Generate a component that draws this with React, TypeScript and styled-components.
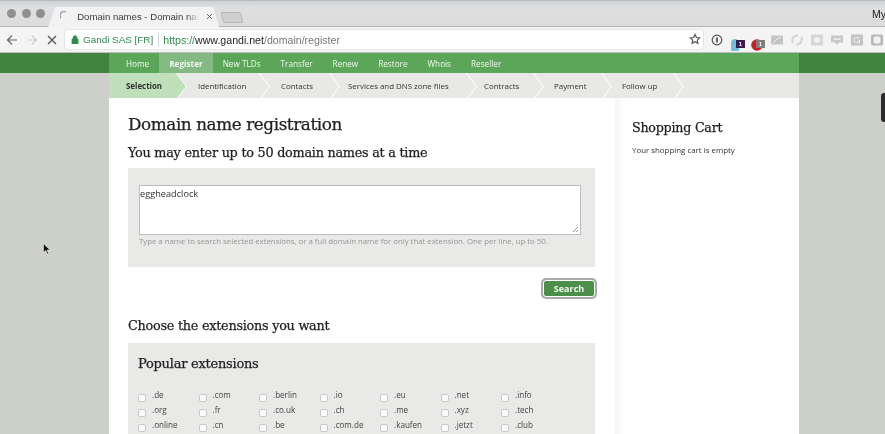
import React from "react";
import styled, { createGlobalStyle } from "styled-components";

const Global = createGlobalStyle`
  html, body { margin: 0; padding: 0; width: 885px; height: 434px; overflow: hidden; background: #cdcfc9; }
  * { box-sizing: border-box; }
  body { font-family: "Open Sans", "Liberation Sans", sans-serif; }
`;

const Page = styled.div`
  width: 885px; height: 434px; overflow: hidden; position: relative;
  display: flex; flex-direction: column;
  background: #cdcfc9;
  filter: blur(0.3px);
`;
const TabStrip = styled.div`
  height: 27px; flex: none; display: flex; align-items: flex-end; padding-left: 7px;
  background: linear-gradient(#cfd0d1, #dedfe0 6px, #dcdcdd);
  border-top: 1px solid #b9babb;
  border-bottom: 1px solid #b4b5b6;
  position: relative;
`;
const Lights = styled.div`
  display: flex; gap: 5.6px; align-self: flex-start; margin-top: 8px;
`;
const Light = styled.span`
  width: 9px; height: 9px; border-radius: 50%; background: #8f8f90;
`;
const Tab = styled.div`
  width: 171px; height: 20px; margin-left: 3px; margin-bottom: -1px; background: #f2f2f2;
  display: flex; align-items: center; padding: 0 10px 2px 12px; gap: 7px; position: relative;
  clip-path: polygon(0 100%, 7px 0, 165px 0, 171px 100%);
  color: #3c3c3c; white-space: nowrap;
`;
const TabTitle = styled.span`
  width: 122px; flex: none; font-family: "Liberation Sans", sans-serif; font-size: 9.6px;
  -webkit-mask-image: linear-gradient(90deg, #000 90%, transparent);
  mask-image: linear-gradient(90deg, #000 90%, transparent);
`;
const NewTab = styled.div`
  width: 20px; height: 11px; margin-left: 3px; margin-bottom: 3px; background: #cfcfd0;
  border: 1px solid #b5b5b6; border-radius: 2px; transform: skewX(14deg);
`;
const User = styled.span`
  position: absolute; right: 0; top: 7px; width: 13px; overflow: hidden;
  font: 10.5px "Liberation Sans", sans-serif; color: #222;
`;
const Toolbar = styled.div`
  height: 26px; flex: none; background: #f4f4f4; display: flex; align-items: center;
  padding: 0 0 0 5px; border-bottom: 1px solid #bdbdbd;
`;
const NavIcon = styled.svg`
  width: 14px; height: 14px; flex: none; margin-right: 6px;
`;
const Omni = styled.div`
  width: 638px; height: 19px; flex: none; background: #fff; border-radius: 2px;
  display: flex; align-items: center; padding-left: 6px; font: 10.6px "Liberation Sans", sans-serif;
  box-shadow: 0 0 0 1px #e6e6e6; position: relative;
`;
const LockIcon = styled.svg`
  width: 8px; height: 9px; margin-right: 4px; flex: none;
`;
const Secure = styled.span`
  color: #2e8b4a; padding-right: 5px; border-right: 1px solid #d8d8d8; line-height: 15px; margin-right: 4px;
  font-size: 9.9px;
`;
const Url = styled.span`
  color: #222;
`;
const UrlGreen = styled.span`color: #2e8b4a;`;
const UrlGray = styled.span`color: #777;`;
const Star = styled.svg`
  position: absolute; right: 2px; top: 3px; width: 12px; height: 12px;
`;
const Exts = styled.div`
  display: flex; align-items: center; gap: 8px; margin-left: 8px;
`;
const ExtWrap = styled.div`
  width: 12px; height: 12px; position: relative; flex: none;
`;
const Badge = styled.span<{ $bg: string }>`
  position: absolute; left: 5px; top: 6px; width: 9px; height: 8px; background: ${(p) => p.$bg};
  color: #fff; font: bold 6px/8px "Liberation Sans", sans-serif; text-align: center;
`;
const ExtIcon = styled.svg`
  width: 12px; height: 12px; flex: none;
`;
const NavBand = styled.div`
  height: 20px; flex: none; background: #41843f; display: flex; padding-left: 109px;
`;
const NavInner = styled.nav`
  width: 690px; background: #5ca65a; display: flex; padding-left: 7px;
`;
const NavItem = styled.a<{ $active?: boolean }>`
  display: flex; align-items: center; padding: 0 10px;
  font-size: 8.2px; color: #f2f7f0; font-weight: ${(p) => (p.$active ? 700 : 400)};
  background: ${(p) => (p.$active ? "#85b983" : "transparent")}; white-space: nowrap;
`;
const StepsBand = styled.div`
  height: 25px; flex: none; padding-left: 109px; display: flex;
`;
const Steps = styled.div`
  width: 690px; background: #e8e8e6; display: flex; overflow: hidden;
`;
const Step = styled.div<{ $active?: boolean; $w: number; $pad: number }>`
  width: ${(p) => p.$w}px; flex: none; position: relative; display: flex; align-items: center;
  padding-left: ${(p) => p.$pad}px; font-size: 7.9px; color: #333; white-space: nowrap;
  font-weight: ${(p) => (p.$active ? 700 : 400)};
  background: ${(p) => (p.$active ? "#bfe0bb" : "transparent")};
  &::after {
    content: ""; position: absolute; right: -9px; top: 3.5px; width: 18px; height: 18px; z-index: 1;
    transform: rotate(45deg) skew(8deg, 8deg);
    background: ${(p) => (p.$active ? "#bfe0bb" : "#e8e8e6")};
    border-top: 1px solid #fff; border-right: 1px solid #fff;
  }
`;
const Body = styled.div`
  flex: 1; min-height: 0; padding-left: 109px; display: flex;
`;
const Content = styled.div`
  width: 690px; background: #fff; display: flex;
`;
const Main = styled.main`
  width: 506px; flex: none; padding: 15px 20px 0 19px;
`;
const Side = styled.aside`
  flex: 1; padding: 21px 17px; background: linear-gradient(90deg, #f5f5f5, #fcfcfc 6px, #fff 12px);
`;
const H1 = styled.h1`
  margin: 0; font: 400 16.8px/22px "DejaVu Serif", serif; color: #222; letter-spacing: -0.4px;
  -webkit-text-stroke: 0.25px #222;
`;
const H2 = styled.h2`
  margin: 0; font: 400 12.8px/18px "DejaVu Serif", serif; color: #222; letter-spacing: -0.25px;
  -webkit-text-stroke: 0.25px #222;
`;
const SubHead = styled(H2)`
  margin-top: 9px;
`;
const SearchBox = styled.div`
  margin-top: 6px; height: 99px; background: #e9e9e8; padding: 17px 14px 0 11px;
`;
const Area = styled.div`
  height: 50px; background: #fff; border: 1px solid #bdbdbd; padding: 1px 0; position: relative;
  font-size: 9.2px; line-height: 13px; color: #333;
`;
const Grip = styled.svg`
  position: absolute; right: 1px; bottom: 1px; width: 7px; height: 7px;
`;
const Help = styled.p`
  margin: 1px 0 0; font-size: 7.8px; line-height: 11px; color: #969696; white-space: nowrap;
`;
const ButtonRow = styled.div`
  display: flex; justify-content: flex-end; margin-top: 13px;
`;
const SearchBtn = styled.button`
  width: 52px; height: 17px; background: #4b8f49; color: #f4f8f2; border: 1px solid #fff; border-radius: 3px;
  box-shadow: 0 0 0 2px #a9aba9; font: 700 9px "Open Sans", sans-serif; padding: 0;
`;
const ChooseHead = styled(H2)`
  margin-top: 20px;
`;
const ExtBox = styled.section`
  margin-top: 8px; background: #e9e9e8; padding: 12px 10px 0; height: 100px;
`;
const BoxTitle = styled.h3`
  margin: 0; font: 400 13px/18px "DejaVu Serif", serif; color: #222; letter-spacing: -0.25px;
  -webkit-text-stroke: 0.25px #222;
`;
const ExtGrid = styled.div`
  margin-top: 16px; display: grid; grid-template-columns: repeat(7, 60.5px); grid-auto-rows: 15px;
`;
const ExtItem = styled.label`
  display: flex; font-size: 8.1px; color: #444; line-height: 11px;
`;
const Check = styled.span`
  width: 8px; height: 8px; margin: 5px 6px 0 0; background: #fbfbfb; border: 1px solid #c9c9c9; border-radius: 2px; flex: none;
`;
const CartTitle = styled.h2`
  margin: 0; font: 400 12.7px/18px "DejaVu Serif", serif; color: #222; letter-spacing: -0.25px;
  -webkit-text-stroke: 0.25px #222;
`;
const CartText = styled.p`
  margin: 7px 0 0; font-size: 7.9px; line-height: 12px; color: #333;
`;
const Nub = styled.div`
  position: absolute; right: 0; top: 93px; width: 4px; height: 29px; background: #2c2c2c; border-radius: 3px 0 0 3px;
`;
const Cursor = styled.svg`
  position: absolute; left: 43px; top: 243px; width: 8px; height: 12px;
`;

const nav = ["Home", "Register", "New TLDs", "Transfer", "Renew", "Restore", "Whois", "Reseller"];
const steps: [string, number, number][] = [
  ["Selection", 67, 17], ["Identification", 83, 22], ["Contacts", 70, 22], ["Services and DNS zone files", 137, 19],
  ["Contracts", 67, 18], ["Payment", 68, 21], ["Follow up", 72, 21],
];
const exts = [
  ".de", ".com", ".berlin", ".io", ".eu", ".net", ".info",
  ".org", ".fr", ".co.uk", ".ch", ".me", ".xyz", ".tech",
  ".online", ".cn", ".be", ".com.de", ".kaufen", ".jetzt", ".club",
];

export default function App() {
  return (
    <Page>
      <Global />
      <TabStrip>
        <Lights><Light /><Light /><Light /></Lights>
        <Tab>
          <svg width="10" height="10" viewBox="0 0 10 10" style={{ flex: "none" }}><path d="M1 7A4 4 0 0 1 6 1" fill="none" stroke="#9a9ab0" strokeWidth="1.3" /></svg>
          <TabTitle>Domain names - Domain name</TabTitle>
          <svg width="7" height="7" viewBox="0 0 7 7" style={{ flex: "none" }}><path d="M1 1l5 5M6 1L1 6" stroke="#666" strokeWidth="1" /></svg>
        </Tab>
        <NewTab />
        <User>My</User>
      </TabStrip>
      <Toolbar>
        <NavIcon viewBox="0 0 14 14"><path d="M12 7H2.500M7 2.500L2.500 7 7 11.500" fill="none" stroke="#666" strokeWidth="1.200" /></NavIcon>
        <NavIcon viewBox="0 0 14 14"><path d="M2 7h9.500M7 2.500L11.500 7 7 11.500" fill="none" stroke="#ccc" strokeWidth="1.200" /></NavIcon>
        <NavIcon viewBox="0 0 14 14"><path d="M3 3l8 8M11 3l-8 8" stroke="#555" strokeWidth="1.300" /></NavIcon>
        <Omni>
          <LockIcon viewBox="0 0 8 9"><path d="M1 4h6v5H1zM2.200 4V2.500a1.800 1.800 0 0 1 3.600 0V4" fill="#2e8b4a" stroke="#2e8b4a" strokeWidth=".8" /></LockIcon>
          <Secure>Gandi SAS [FR]</Secure>
          <Url><UrlGreen>https://</UrlGreen>www.gandi.net<UrlGray>/domain/register</UrlGray></Url>
          <Star viewBox="0 0 24 24"><path d="M12 3l2.800 6 6.500.8-4.800 4.400 1.300 6.500L12 17.500l-5.800 3.200 1.300-6.500L2.700 9.800 9.200 9z" fill="none" stroke="#555" strokeWidth="2.400" /></Star>
        </Omni>
        <Exts>
          <ExtIcon viewBox="0 0 12 12"><circle cx="6" cy="6" r="4.800" fill="none" stroke="#555" strokeWidth="1.200" /><path d="M6 3.500v5" stroke="#555" strokeWidth="1.800" /></ExtIcon>
          <ExtWrap>
            <svg width="9" height="12" viewBox="0 0 9 12"><path d="M0 12V4a4 4 0 0 1 8 0v8z" fill="#6fc1dc" /></svg>
            <Badge $bg="#3c1a50">1</Badge>
          </ExtWrap>
          <ExtWrap>
            <svg width="12" height="12" viewBox="0 0 12 12"><circle cx="6" cy="6" r="5.800" fill="#c8201e" /></svg>
            <Badge $bg="#7d7d7d">1</Badge>
          </ExtWrap>
          <ExtIcon viewBox="0 0 12 12"><rect y="1.500" width="12" height="9" fill="#c4c4c4" /><path d="M2 9l4-4 4-2" stroke="#eee" strokeWidth="1" fill="none" /></ExtIcon>
          <ExtIcon viewBox="0 0 12 12"><path d="M2 9A5 5 0 0 1 7 1.500M10 3a5 5 0 0 1-5 7.500" fill="none" stroke="#d4d4d4" strokeWidth="2" /></ExtIcon>
          <ExtIcon viewBox="0 0 12 12"><rect y=".5" width="12" height="11" fill="#d6d6d6" /><circle cx="6" cy="6" r="3" fill="#f2f2f2" /></ExtIcon>
          <ExtIcon viewBox="0 0 12 12"><path d="M0 1.500h12v7H8L6 11 4 8.500H0z" fill="#c8c8c8" /><path d="M2.500 5h7" stroke="#f2f2f2" strokeWidth="1.500" /></ExtIcon>
          <ExtIcon viewBox="0 0 12 12"><rect y=".5" width="12" height="11" fill="#c4c4c4" /><path d="M8.500 3.500H5.500a2.500 2.500 0 0 0 0 5h3V6H6.500" fill="none" stroke="#f2f2f2" strokeWidth="1" /></ExtIcon>
          <ExtIcon viewBox="0 0 12 12"><rect y=".5" width="12" height="11" rx="2" fill="#b8b8b8" /><rect x="2.500" y="2.500" width="7" height="7" rx="2" fill="#f2f2f2" /></ExtIcon>
        </Exts>
      </Toolbar>
      <NavBand>
        <NavInner>
          {nav.map((n) => <NavItem key={n} $active={n === "Register"}>{n}</NavItem>)}
        </NavInner>
      </NavBand>
      <StepsBand>
        <Steps>
          {steps.map(([s, w, pad], i) => <Step key={s} $w={w} $pad={pad} $active={i === 0}>{s}</Step>)}
        </Steps>
      </StepsBand>
      <Body>
        <Content>
          <Main>
            <H1>Domain name registration</H1>
            <SubHead>You may enter up to 50 domain names at a time</SubHead>
            <SearchBox>
              <Area>
                eggheadclock
                <Grip viewBox="0 0 7 7"><path d="M1 6l5-5M4 6l2-2" stroke="#777" strokeWidth=".8" /></Grip>
              </Area>
              <Help>Type a name to search selected extensions, or a full domain name for only that extension. One per line, up to 50.</Help>
            </SearchBox>
            <ButtonRow><SearchBtn>Search</SearchBtn></ButtonRow>
            <ChooseHead>Choose the extensions you want</ChooseHead>
            <ExtBox>
              <BoxTitle>Popular extensions</BoxTitle>
              <ExtGrid>
                {exts.map((e) => <ExtItem key={e}><Check />{e}</ExtItem>)}
              </ExtGrid>
            </ExtBox>
          </Main>
          <Side>
            <CartTitle>Shopping Cart</CartTitle>
            <CartText>Your shopping cart is empty</CartText>
          </Side>
        </Content>
      </Body>
      <Nub />
      <Cursor viewBox="0 0 8 12"><path d="M.5.500v9l2.200-2 1.500 3.500 1.300-.6-1.500-3.300H7z" fill="#111" stroke="#fff" strokeWidth=".5" /></Cursor>
    </Page>
  );
}
